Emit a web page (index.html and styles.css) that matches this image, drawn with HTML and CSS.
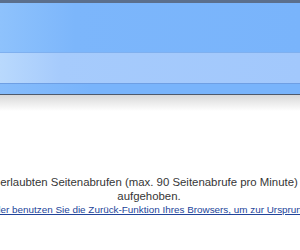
FILE: index.html
```html
<!DOCTYPE html>
<html lang="de">
<head>
  <meta charset="UTF-8" />
  <meta name="viewport" content="width=device-width, initial-scale=1.0" />
  <title>Zugang gesperrt</title>
  <link rel="stylesheet" href="styles.css">
</head>
<body>
  <div class="header">
    <div class="bar-top"></div>
    <div class="bar-mid"></div>
    <div class="bar-bottom"></div>
  </div>
  <div class="shadow"></div>

  <div class="content">
    <p class="message">erlaubten Seitenabrufen (max. 90 Seitenabrufe pro Minute)<br>aufgehoben.</p>
    <p class="back"><a href="#">Klicken Sie hier oder benutzen Sie die Zurück-Funktion Ihres Browsers, um zur Ursprungsseite zu gehen.</a></p>
  </div>
</body>
</html>
```

FILE: styles.css
```css
body {
  margin: 0;
  font-family: "Liberation Sans", Arial, sans-serif;
  background-color: #ffffff;
  color: #363636;
  overflow: hidden;
}
.header {
  border-top: 3px solid #5b6f8c;
  border-bottom: 1px solid #4f5a6c;
}
.bar-top {
  height: 49px;
  background: linear-gradient(to right, #8ec2fc 0%, #7cb6fb 25%, #79b4fb 100%);
}
.bar-mid {
  height: 30px;
  border-top: 1px solid #7fb0ef;
  background: linear-gradient(to right, #b9d9fd 0%, #a6cbfc 20%, #a2c8fc 100%);
}
.bar-bottom {
  height: 10px;
  border-top: 1px solid #6e9fe4;
  background: linear-gradient(to right, #86bcfb 0%, #79b4fb 30%, #79b4fb 100%);
}
.shadow {
  height: 16px;
  background: linear-gradient(to bottom, #d8d8d8, #ffffff);
}
.content {
  width: 700px;
  margin-left: -201px;
  padding-top: 64px;
  text-align: center;
  font-size: 11.4px;
  line-height: 14px;
  white-space: nowrap;
}
.message {
  margin: 0;
}
.back {
  margin: 0;
  font-size: 9.9px;
}
.back a {
  color: #22449a;
}
```
